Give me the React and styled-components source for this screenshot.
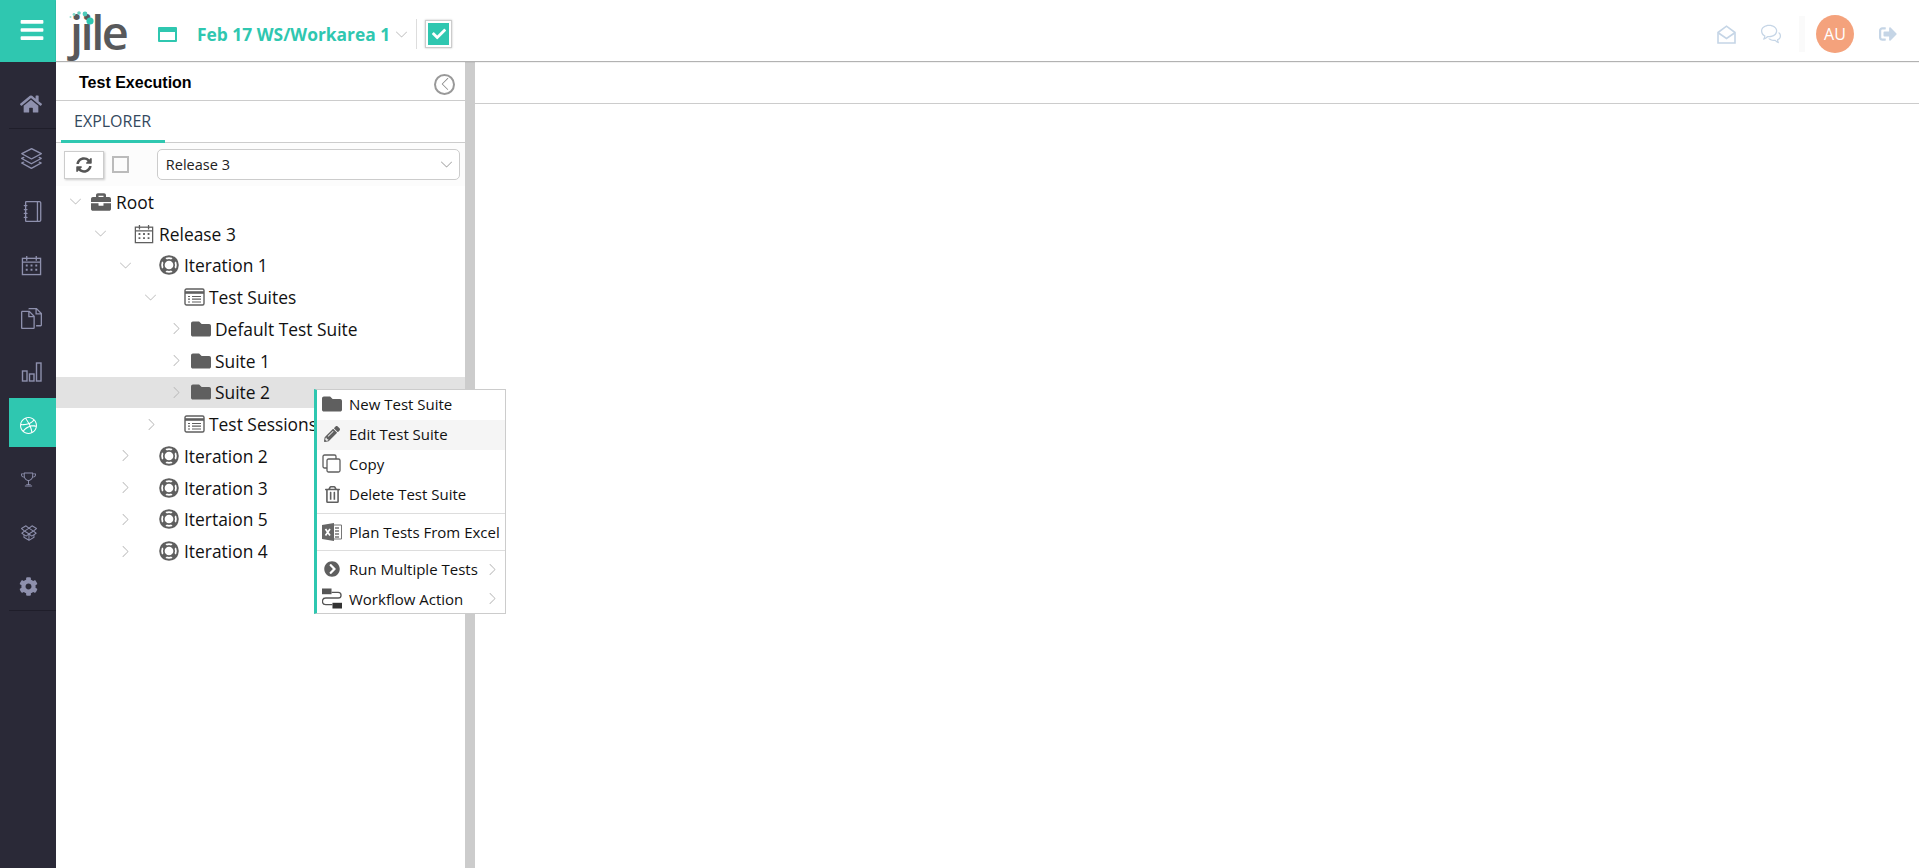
import React from 'react'
import styled, { createGlobalStyle } from 'styled-components'
import { FaHome, FaCog, FaBriefcase, FaFolder, FaPencilAlt, FaRegTrashAlt, FaChevronCircleRight, FaSyncAlt, FaSignOutAlt, FaCheck, FaBars } from 'react-icons/fa'
import { SlLayers, SlNotebook, SlDocs, SlTrophy, SlSocialDropbox, SlSocialDribbble, SlBubbles, SlArrowDown, SlArrowRight, SlArrowLeft } from 'react-icons/sl'

const Global = createGlobalStyle`
  html, body { margin: 0; padding: 0; background: #fff; }
  body { font-family: 'Open Sans', sans-serif; color: #111; overflow: hidden; }
  * { box-sizing: border-box; }
`

const Page = styled.div`
  position: relative;
  width: 1919px;
  height: 868px;
  display: grid;
  grid-template-columns: 56px 1fr;
  grid-template-rows: 62px 1fr;
`
const MenuCell = styled.div`
  background: #2fc7b0;
  color: #fff;
  font-size: 26px;
  display: flex;
  align-items: center;
  justify-content: center;
  padding: 0 0 2px 7px;
`
const TopBar = styled.header`
  height: 61px;
  display: flex;
  align-items: center;
  background: #fff;
  box-shadow: 0 1px 1px rgba(0,0,0,.3);
  z-index: 2;
  padding: 7px 22px 0 0;
`
const Logo = styled.div`
  position: relative;
  align-self: flex-start;
  width: 60px;
  height: 60px;
  margin: -7px 0 0 12px;
  font-family: 'Open Sans', sans-serif;
  font-size: 47px;
  font-weight: 600;
  letter-spacing: -2.5px;
  line-height: 64px;
  color: #58595b;
  padding-left: 2px;
  svg { position: absolute; left: 0; top: 0; }
`
const WindowIcon = styled.span`
  width: 19px;
  height: 15px;
  margin-left: 30px;
  border: 2px solid #2fc7b0;
  border-top-width: 5px;
  border-radius: 1px;
`
const WorkTitle = styled.span`
  margin-left: 20px;
  font-size: 17.4px;
  font-weight: 700;
  color: #2fc7b0;
  white-space: nowrap;
`
const SmallArrow = styled.span`
  display: flex;
  color: ${p => p.$color || '#bbb'};
  font-size: ${p => p.$size || 11}px;
  margin-left: ${p => p.$left || 0}px;
`
const Divider = styled.span`
  width: 1px;
  height: 30px;
  margin-left: 9px;
  background: #ddd;
`
const Tick = styled.span`
  width: 27px;
  height: 28px;
  margin-left: 8px;
  border: 1px solid #ccc;
  box-shadow: 0 0 2px rgba(0,0,0,.25);
  padding: 2px;
  span {
    display: flex;
    width: 100%;
    height: 100%;
    align-items: center;
    justify-content: center;
    background: #2fc7b0;
    color: #fff;
    font-size: 14px;
  }
`
const RightTools = styled.div`
  margin-left: auto;
  display: flex;
  align-items: center;
  color: #c5d5e6;
`
const ToolIcon = styled.span`
  display: flex;
  font-size: ${p => p.$size || 18}px;
  margin-left: ${p => p.$left || 0}px;
`
const ToolSep = styled.span`
  width: 6px;
  height: 36px;
  margin-left: 18px;
  background: #fafafa;
`
const Avatar = styled.span`
  width: 38px;
  height: 38px;
  margin-left: 11px;
  border-radius: 50%;
  background: #f4a27c;
  color: #fff;
  font-size: 16px;
  display: flex;
  align-items: center;
  justify-content: center;
`
const Sidebar = styled.nav`
  background: #2a2937;
  padding: 18px 0 0 9px;
  display: flex;
  flex-direction: column;
`
const NavItem = styled.a`
  height: 49px;
  margin-top: ${p => p.$active ? -4 : 0}px;
  margin-bottom: ${p => p.$active ? 8.6 : 4.6}px;
  display: flex;
  align-items: center;
  padding-left: ${p => p.$pad}px;
  padding-top: ${p => p.$active ? 6 : 0}px;
  font-size: ${p => p.$size || 21}px;
  background: ${p => p.$active ? '#2fc7b0' : 'transparent'};
  color: ${p => p.$active ? '#fff' : '#8e90ad'};
  border-bottom: ${p => p.$line ? '1px solid #1f1e2a' : 'none'};
  svg { display: block; }
`
const Body = styled.main`
  display: grid;
  grid-template-columns: 409px 10px 1fr;
  min-height: 0;
`
const Panel = styled.section`
  display: flex;
  flex-direction: column;
`
const PanelHead = styled.div`
  height: 39px;
  display: flex;
  align-items: center;
  justify-content: space-between;
  padding: 0 10px 0 23px;
  border-bottom: 1px solid #ccc;
  h2 {
    margin: 3px 0 0;
    font: bold 16px 'Liberation Sans', sans-serif;
    color: #000;
  }
`
const Collapse = styled.span`
  width: 21px;
  height: 21px;
  margin-top: 6px;
  border: 2px solid #999;
  border-radius: 50%;
  color: #888;
  font-size: 12px;
  display: flex;
  align-items: center;
  justify-content: center;
`
const Tabs = styled.div`
  height: 42px;
  padding-left: 5px;
  border-bottom: 1px solid #ccc;
  display: flex;
`
const Tab = styled.div`
  width: 104px;
  height: 42px;
  padding: 9px 0 0 13px;
  font-size: 16px;
  line-height: 22px;
  color: #34495e;
  border-bottom: 3px solid #2fc7b0;
`
const Toolbar = styled.div`
  height: 43px;
  display: flex;
  align-items: center;
  padding: 0 5px 0 8px;
  background: #fcfcfc;
`
const RefreshBtn = styled.button`
  width: 40px;
  height: 28px;
  background: #fff;
  border: 1px solid #ccc;
  box-shadow: 1px 1px 2px rgba(0,0,0,.2);
  color: #555;
  font-size: 16px;
  padding: 0;
  display: flex;
  align-items: center;
  justify-content: center;
`
const Check = styled.span`
  width: 17px;
  height: 17px;
  margin-left: 8px;
  border: 2px solid #bbb;
`
const Select = styled.div`
  width: 304px;
  height: 31px;
  margin-left: 28px;
  border: 1px solid #ccc;
  border-radius: 5px;
  background: #fff;
  display: flex;
  align-items: center;
  justify-content: space-between;
  padding: 0 7px 0 8px;
  font-size: 14.5px;
  color: #222;
`
const Row = styled.div`
  height: 31.75px;
  display: flex;
  align-items: center;
  padding-left: ${p => p.$indent}px;
  background: ${p => p.$selected ? '#e2e2e2' : 'transparent'};
  font-size: 17.4px;
  white-space: nowrap;
`
const Caret = styled.span`
  display: flex;
  width: 12px;
  color: #bbb;
  font-size: 11px;
`
const NodeIcon = styled.span`
  display: flex;
  width: ${p => p.$width}px;
  margin-left: ${p => p.$gap}px;
  color: #5f5f5f;
  font-size: 20px;
`
const Scroll = styled.div`
  background: #ccc;
`
const Main = styled.div`
  height: 42px;
  border-bottom: 1px solid #ccc;
`
const Menu = styled.ul`
  position: absolute;
  left: 314px;
  top: 389px;
  width: 192px;
  height: 225px;
  margin: 0;
  padding: 0;
  list-style: none;
  background: #fff;
  border: 1px solid #ccc;
  border-left: 3px solid #2fc7b0;
  z-index: 5;
`
const MenuItem = styled.li`
  height: ${p => p.$height || 30}px;
  display: flex;
  align-items: center;
  padding: 0 7px ${p => p.$lift ?? 2}px 5px;
  font-size: 15px;
  white-space: nowrap;
  color: #111;
  background: ${p => p.$hover ? '#f5f5f5' : 'transparent'};
`
const MenuIcon = styled.span`
  display: flex;
  justify-content: center;
  width: 20px;
  margin-right: 7px;
  color: #5f5f5f;
  font-size: ${p => p.$size || 16}px;
`
const MenuRule = styled.li`
  height: 1px;
  margin: ${p => p.$top}px 0 ${p => p.$bottom}px;
  background: #ddd;
`
const MenuArrow = styled.span`
  display: flex;
  margin-left: auto;
  color: #bbb;
  font-size: 11px;
`

const Outline = ({ children, w = 22, h = 22, vb = '0 0 22 22' }) => (
  <svg width={w} height={h} viewBox={vb} fill="none" stroke="currentColor" strokeWidth="1.4">{children}</svg>
)

const CalendarIcon = ({ size = 21 }) => (
  <Outline w={size} h={size}>
    <rect x="1.5" y="3.5" width="19" height="17" />
    <path d="M6 1v5M16 1v5M1.5 7.5h19" />
    <path d="M5 11h2M10 11h2M15 11h2M5 15.5h2M10 15.5h2M15 15.5h2" strokeWidth="2" />
  </Outline>
)
const BarsIcon = () => (
  <Outline>
    <rect x="1.5" y="10" width="4.5" height="10" />
    <rect x="8.5" y="13" width="4.5" height="7" />
    <rect x="15.5" y="2" width="4.5" height="18" />
  </Outline>
)
const ListIcon = () => (
  <Outline w={21} h={18} vb="0 0 21 18">
    <rect x="1" y="1" width="19" height="16" rx="1.5" />
    <path d="M1 4.5h19" strokeWidth="2.6" />
    <path d="M4 8.5h2M8 8.5h9M4 11.2h2M8 11.2h9M4 14h2M8 14h9" strokeWidth="1.2" />
  </Outline>
)
const RingIcon = () => (
  <svg width="20" height="20" viewBox="0 0 20 20" fill="none" stroke="currentColor">
    <circle cx="10" cy="10" r="8.8" strokeWidth="2" />
    <circle cx="10" cy="10" r="5.2" strokeWidth="1.7" />
    <path d="M3.2 3.2l3.2 3.2M16.8 3.2l-3.2 3.2M3.2 16.8l3.2-3.2M16.8 16.8l-3.2-3.2" strokeWidth="4.6" />
  </svg>
)
const MailOpenIcon = () => (
  <svg width="19" height="19" viewBox="0 0 19 19" fill="none" stroke="currentColor" strokeWidth="1.6">
    <path d="M1 7.5L9.5 1.2 18 7.5V18H1z" />
    <path d="M1.5 8l8 5.5 8-5.5" />
  </svg>
)
const CopyIcon = () => (
  <svg width="20" height="20" viewBox="0 0 20 20" fill="#fff" stroke="currentColor" strokeWidth="1.3">
    <rect x="1" y="1" width="13" height="13" rx="1.5" />
    <rect x="5" y="5" width="13" height="13" rx="1.5" />
  </svg>
)
const ExcelIcon = () => (
  <svg width="20" height="20" viewBox="0 0 20 20">
    <path d="M10 3h9.5v14H10z" fill="none" stroke="#777" />
    <path d="M13 6h4M13 9h4M13 12h4M13 15h4" stroke="#777" strokeWidth="1.4" />
    <path d="M0 3l12-2v18L0 17z" fill="#666" />
    <path d="M3.5 7l4.5 6.5M8 7l-4.5 6.5" stroke="#fff" strokeWidth="1.7" />
  </svg>
)
const FlowIcon = () => (
  <svg width="21" height="21" viewBox="0 0 21 21">
    <rect x="0" y="0" width="10" height="6" fill="#555" />
    <rect x="11" y="15" width="10" height="6" fill="#333" />
    <path d="M10 4h7a3 3 0 0 1 0 6H4a3 3 0 0 0 0 7h7" fill="none" stroke="#555" strokeWidth="1.4" />
  </svg>
)
const LogoDots = () => (
  <svg width="60" height="60" viewBox="0 0 60 60">
    <circle cx="2.5" cy="17" r="1" fill="#9adfd4" />
    <circle cx="6" cy="14.5" r="1.4" fill="#7fd8ca" />
    <circle cx="11" cy="13" r="1.8" fill="#66d2c2" />
    <circle cx="17" cy="14" r="2.4" fill="#4ccbb9" />
    <circle cx="22" cy="21" r="3.6" fill="#2fc7b0" />
  </svg>
)

const navItems = [
  { icon: <FaHome />, pad: 11, size: 22, line: true },
  { icon: <SlLayers />, pad: 12 },
  { icon: <SlNotebook />, pad: 13 },
  { icon: <CalendarIcon />, pad: 12 },
  { icon: <SlDocs />, pad: 12 },
  { icon: <BarsIcon />, pad: 12 },
  { icon: <SlSocialDribbble />, pad: 11, size: 17, active: true },
  { icon: <SlTrophy />, pad: 12, size: 15 },
  { icon: <SlSocialDropbox />, pad: 12, size: 16 },
  { icon: <FaCog />, pad: 10, size: 19, line: true },
]

const tree = [
  { label: 'Root', indent: 14, open: true, icon: <FaBriefcase />, gap: 9, width: 25 },
  { label: 'Release 3', indent: 39, open: true, icon: <CalendarIcon size={20} />, gap: 27, width: 25 },
  { label: 'Iteration 1', indent: 64, open: true, icon: <RingIcon />, gap: 27, width: 25 },
  { label: 'Test Suites', indent: 89, open: true, icon: <ListIcon />, gap: 27, width: 25 },
  { label: 'Default Test Suite', indent: 115, icon: <FaFolder />, gap: 8, width: 24 },
  { label: 'Suite 1', indent: 115, icon: <FaFolder />, gap: 8, width: 24 },
  { label: 'Suite 2', indent: 115, icon: <FaFolder />, gap: 8, width: 24, selected: true },
  { label: 'Test Sessions', indent: 90, icon: <ListIcon />, gap: 26, width: 25 },
  { label: 'Iteration 2', indent: 64, icon: <RingIcon />, gap: 27, width: 25 },
  { label: 'Iteration 3', indent: 64, icon: <RingIcon />, gap: 27, width: 25 },
  { label: 'Itertaion 5', indent: 64, icon: <RingIcon />, gap: 27, width: 25 },
  { label: 'Iteration 4', indent: 64, icon: <RingIcon />, gap: 27, width: 25 },
]

function App() {
  return (
    <Page>
      <Global />
      <MenuCell><FaBars /></MenuCell>
      <TopBar>
        <Logo><LogoDots />jile</Logo>
        <WindowIcon />
        <WorkTitle>Feb 17 WS/Workarea 1</WorkTitle>
        <SmallArrow $left={6}><SlArrowDown /></SmallArrow>
        <Divider />
        <Tick><span><FaCheck /></span></Tick>
        <RightTools>
          <ToolIcon><MailOpenIcon /></ToolIcon>
          <ToolIcon $size={20} $left={25}><SlBubbles /></ToolIcon>
          <ToolSep />
          <Avatar>AU</Avatar>
          <ToolIcon $size={18} $left={25}><FaSignOutAlt /></ToolIcon>
        </RightTools>
      </TopBar>
      <Sidebar>
        {navItems.map((n, i) => (
          <NavItem key={i} $pad={n.pad} $size={n.size} $active={n.active} $line={n.line}>{n.icon}</NavItem>
        ))}
      </Sidebar>
      <Body>
        <Panel>
          <PanelHead>
            <h2>Test Execution</h2>
            <Collapse><SlArrowLeft /></Collapse>
          </PanelHead>
          <Tabs><Tab>EXPLORER</Tab></Tabs>
          <Toolbar>
            <RefreshBtn><FaSyncAlt /></RefreshBtn>
            <Check />
            <Select>Release 3<SmallArrow $color="#999"><SlArrowDown /></SmallArrow></Select>
          </Toolbar>
          <div>
            {tree.map(n => (
              <Row key={n.label} $indent={n.indent} $selected={n.selected}>
                <Caret>{n.open ? <SlArrowDown /> : <SlArrowRight />}</Caret>
                <NodeIcon $gap={n.gap} $width={n.width}>{n.icon}</NodeIcon>
                {n.label}
              </Row>
            ))}
          </div>
        </Panel>
        <Scroll />
        <Main />
      </Body>
      <Menu>
        <MenuItem><MenuIcon $size={20}><FaFolder /></MenuIcon>New Test Suite</MenuItem>
        <MenuItem $hover><MenuIcon><FaPencilAlt /></MenuIcon>Edit Test Suite</MenuItem>
        <MenuItem><MenuIcon><CopyIcon /></MenuIcon>Copy</MenuItem>
        <MenuItem><MenuIcon $size={17}><FaRegTrashAlt /></MenuIcon>Delete Test Suite</MenuItem>
        <MenuRule $top={3} $bottom={0} />
        <MenuItem $height={36} $lift={0}><MenuIcon><ExcelIcon /></MenuIcon>Plan Tests From Excel</MenuItem>
        <MenuRule $top={0} $bottom={4} />
        <MenuItem><MenuIcon><FaChevronCircleRight /></MenuIcon>Run Multiple Tests<MenuArrow><SlArrowRight /></MenuArrow></MenuItem>
        <MenuItem $height={29}><MenuIcon><FlowIcon /></MenuIcon>Workflow Action<MenuArrow><SlArrowRight /></MenuArrow></MenuItem>
      </Menu>
    </Page>
  )
}

export default App
